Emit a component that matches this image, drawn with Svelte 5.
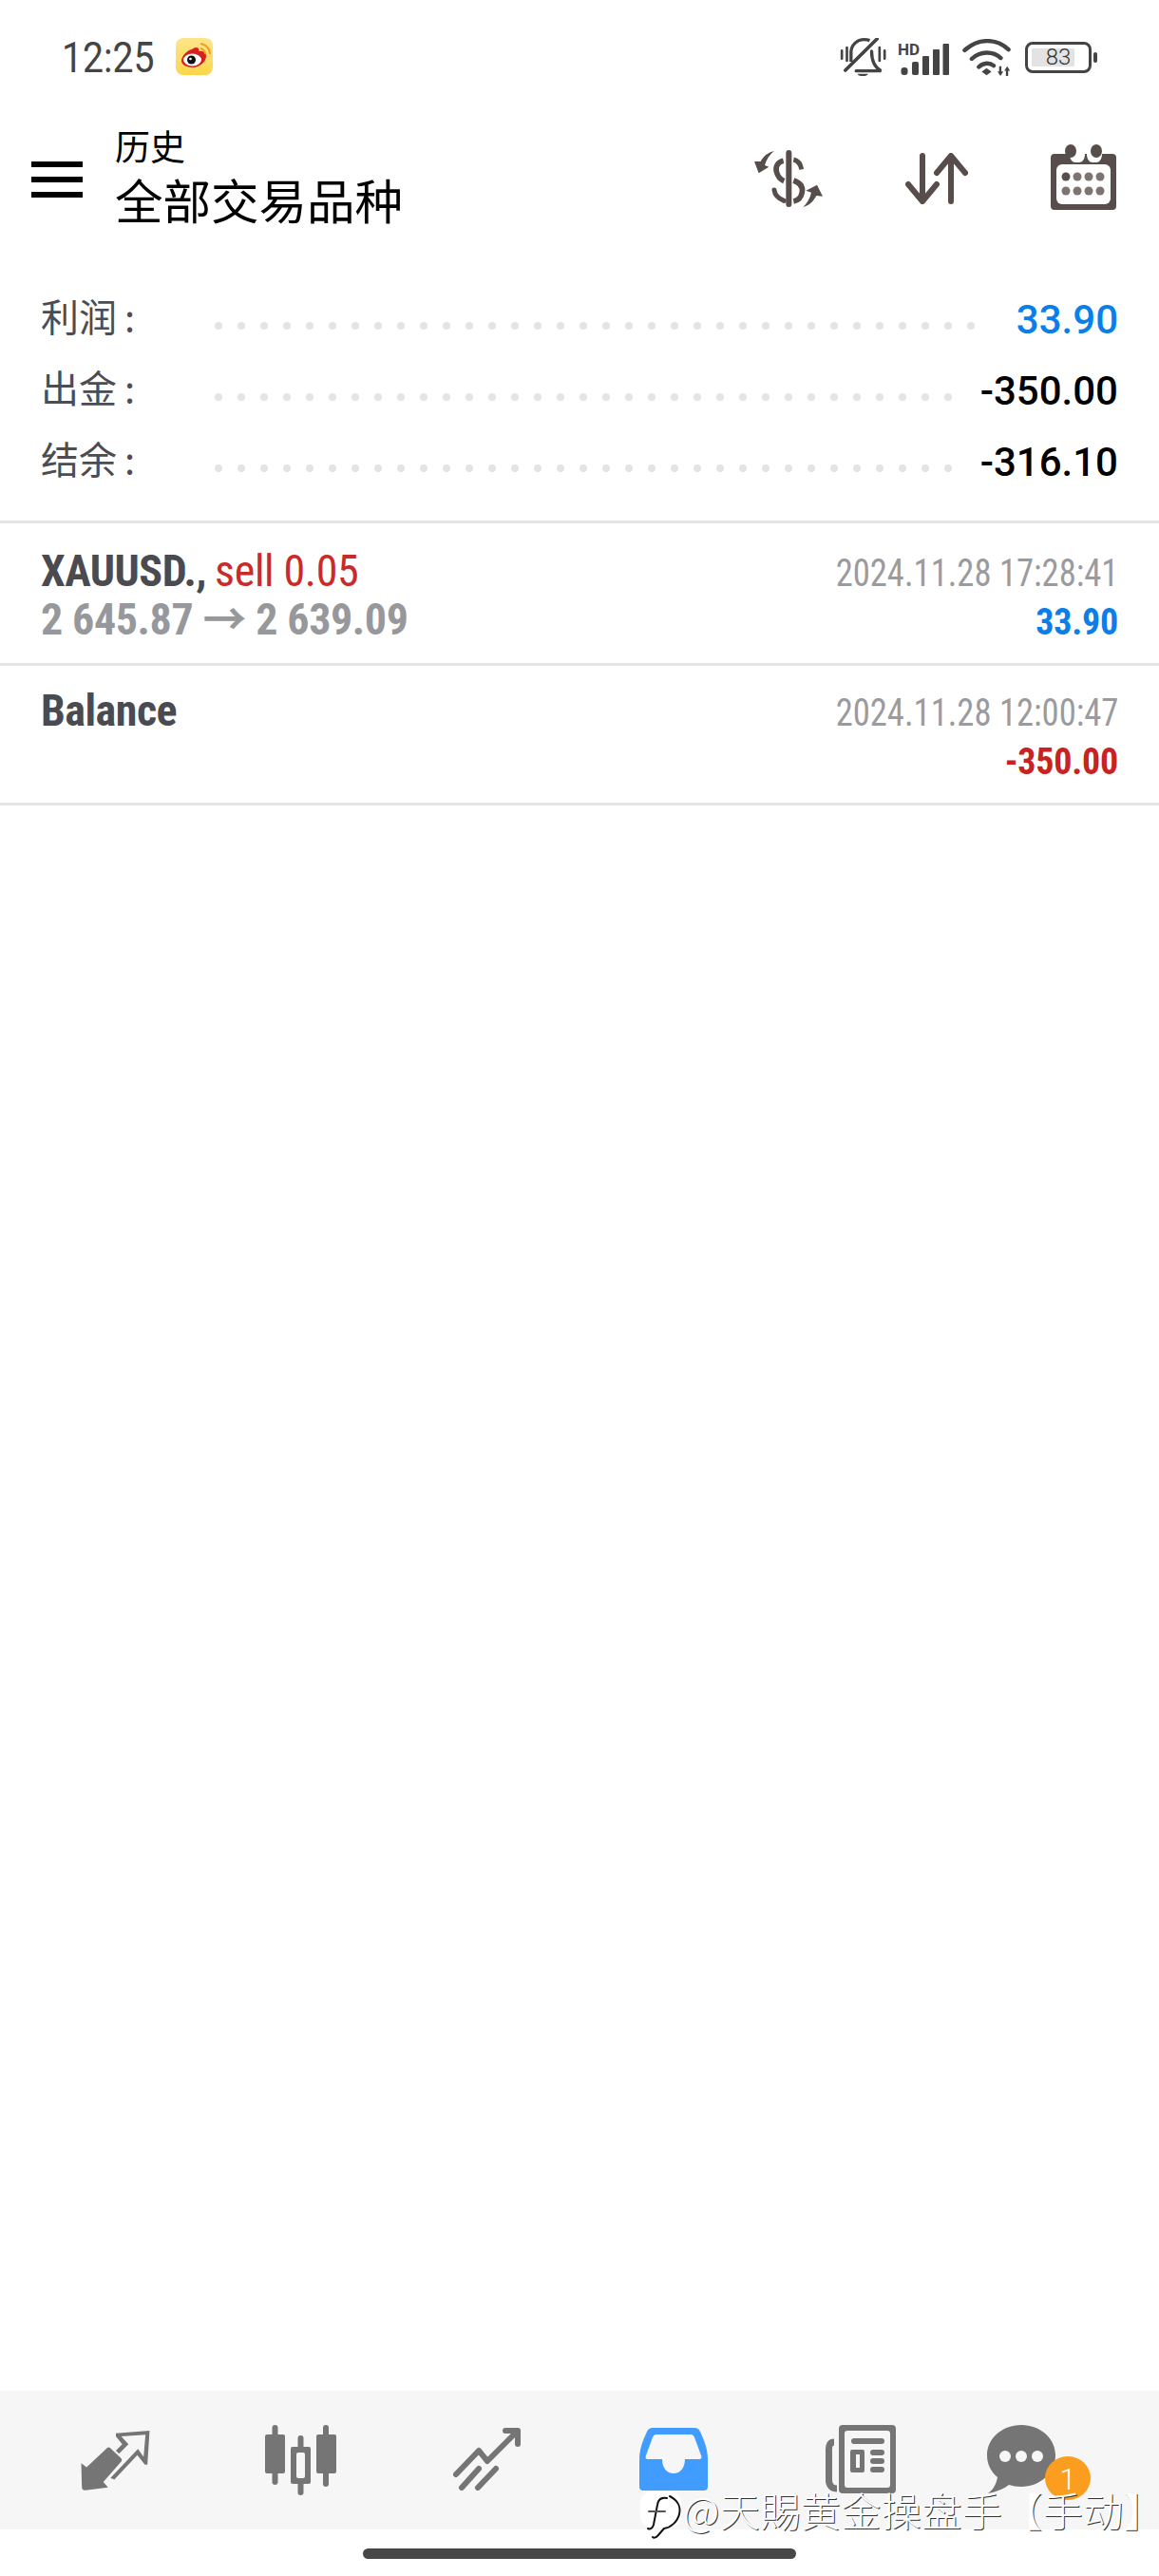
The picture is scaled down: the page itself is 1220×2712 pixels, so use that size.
<script>
  const rows = [
    { label: '利润', value: '33.90', cls: 'blue', dots: 34 },
    { label: '出金', value: '-350.00', cls: 'black', dots: 33 },
    { label: '结余', value: '-316.10', cls: 'black', dots: 33 }
  ];
</script>

<div class="page">
  <div class="status">
    <span class="time">12:25</span>
    <svg class="weibo" viewBox="0 0 39 39">
      <defs><linearGradient id="wb" x1="0" y1="0" x2="0" y2="1"><stop offset="0" stop-color="#fde58c"/><stop offset="1" stop-color="#fdd649"/></linearGradient></defs>
      <rect width="39" height="39" rx="8" fill="url(#wb)"/>
      <path d="M6 24c0-5 6-11 11-12 2-2 5-3 7-1 1 1 0 3 0 3 4-1 8 1 8 5 0 6-7 12-14 12-7 0-12-3-12-7z" fill="#d8201f"/>
      <ellipse cx="17.500" cy="23" rx="9.500" ry="6.500" fill="#fff"/>
      <circle cx="16.500" cy="23" r="4.500" fill="#111"/><circle cx="15.500" cy="22" r="1.300" fill="#fff"/>
      <path d="M26 11a6 6 0 0 1 5 6M26 6a11 11 0 0 1 10 11" fill="none" stroke="#eda11f" stroke-width="2"/>
    </svg>
    <div class="status-right">
      <svg class="bell" viewBox="45 30 142 120" fill="none" stroke="#444" stroke-width="10">
        <path d="M49 70v25M65 60v42M168 60v42M184 70v25" stroke-width="8" stroke-linecap="round"/>
        <path d="M78 105V75c0-22 18-40 42-40 6 0 12 1 17 3"/>
        <path d="M143 72c0 28 8 50 30 62H94" stroke-linecap="round"/>
        <path d="M60 132L160 33" stroke-width="11" stroke-linecap="round"/>
        <path d="M98 143h34c-4 10-30 10-34 0z" fill="#444" stroke="none"/>
      </svg>
      <svg class="signal" viewBox="0 0 54 34" fill="#444">
        <text x="0" y="13" class="hd">HD</text>
        <rect x="3.500" y="26" width="7" height="8" rx="3"/><rect x="15" y="20" width="7" height="14" rx="2"/><rect x="26" y="14" width="7" height="20" rx="1"/><rect x="37" y="7" width="7" height="27" rx="1"/><rect x="47.500" y="1" width="6.500" height="33" rx="1"/>
      </svg>
      <svg class="wifi" viewBox="430 35 150 115" fill="none" stroke="#444" stroke-width="13" stroke-linecap="round">
        <path d="M437 70C480 32 535 32 573 68M459 97C485 72 525 72 549 94M481 122C495 108 515 108 527 118"/>
        <path d="M505 126l15 11-15 11-15-11z" fill="#444" stroke="none"/>
        <path d="M544 120h7v16h6l-9 14-9-14h5zM565 150h7v-16h6l-9-14-9 14h5z" fill="#444" stroke="none"/>
      </svg>
      <div class="battery">
        <div class="batt-box"><span class="batt-fill"></span><span class="batt-num">83</span></div>
        <span class="batt-nub"></span>
      </div>
    </div>
  </div>

  <header class="top">
    <div class="burger"><i></i><i></i><i></i></div>
    <div class="titles">
      <div class="t1">历史</div>
      <div class="t2">全部交易品种</div>
    </div>
    <div class="actions">
      <svg class="a-dollar" viewBox="42 52 216 180" fill="#574d4a">
        <rect x="142" y="52" width="18" height="180" rx="9"/>
        <g fill="none" stroke="#574d4a">
          <path d="M134 86C116 90 108 104 112 120C116 136 124 145 136 150" stroke-width="17"/>
          <path d="M166 82C180 85 188 95 191 113" stroke-width="15"/>
          <path d="M166 148C186 155 196 168 193 185C190 203 178 212 166 214" stroke-width="17"/>
          <path d="M105 178C107 195 118 205 136 212" stroke-width="15" stroke-linecap="round"/>
        </g>
        <path d="M104 55C85 60 72 70 62 88L42 88L56 125L88 105L75 100C80 82 90 68 104 55Z"/>
        <path d="M196 232C215 227 228 215 238 196L258 198L240 162L205 180L222 186C218 205 208 220 196 232Z"/>
      </svg>
      <svg class="a-sort" viewBox="0 0 66 54" fill="none" stroke="#574d4a" stroke-width="6" stroke-linecap="round" stroke-linejoin="round">
        <path d="M18 3v48M3 33l15 18 15-18M48 51V3M33 21L48 3l15 18"/>
      </svg>
      <svg class="a-cal" viewBox="0 0 69 69">
        <path d="M4 10h16c0 6 3 9 6 9h4c3 0 6-3 6-9h2c0 6 3 9 6 9h4c3 0 6-3 6-9h11a4 4 0 0 1 4 4v51a4 4 0 0 1-4 4H4a4 4 0 0 1-4-4V14a4 4 0 0 1 4-4z" fill="#574d4a"/>
        <ellipse cx="21" cy="7" rx="6" ry="7" fill="#574d4a"/><ellipse cx="48" cy="7" rx="6" ry="7" fill="#574d4a"/>
        <rect x="6" y="21" width="57" height="42" rx="6" fill="#fff"/>
        {#each [16,28,40,52] as x, i}
          <ellipse cx={x} cy="34" rx="4.500" ry="4.500" fill={i === 0 ? '#574d4a' : '#7d7370'}/>
          <ellipse cx={x} cy="49" rx="4.500" ry="4.500" fill="#7d7370"/>
        {/each}
      </svg>
    </div>
  </header>

  <section class="summary">
    {#each rows as r}
      <div class="sum-row">
        <span class="label">{r.label}<b>:</b></span>
        <span class="dots">{#each Array(r.dots) as _}<i></i>{/each}</span>
        <span class="val {r.cls}">{r.value}</span>
      </div>
    {/each}
  </section>

  <section class="list">
    <div class="deal first">
      <div class="line">
        <span class="c sym">XAUUSD.,</span>
        <span class="c sell">sell 0.05</span>
        <span class="spacer"></span>
        <span class="c date">2024.11.28 17:28:41</span>
      </div>
      <div class="line">
        <span class="c price">2 645.87 → 2 639.09</span>
        <span class="spacer"></span>
        <span class="c pnl blue">33.90</span>
      </div>
    </div>
    <div class="deal second">
      <div class="line">
        <span class="c sym">Balance</span>
        <span class="spacer"></span>
        <span class="c date">2024.11.28 12:00:47</span>
      </div>
      <div class="line">
        <span class="spacer"></span>
        <span class="c pnl red lone">-350.00</span>
      </div>
    </div>
  </section>

  <div class="grow"></div>

  <nav class="bottom">
    <svg class="n n1" viewBox="45 42 217 190" fill="#757575">
      <path d="M45 145L62 158L127 97Q132 93 137 97L172 130Q176 135 172 140L115 205L130 222L58 231Q48 232 47 222Z"/>
      <path d="M155 50L262 42L255 150L247 150L223 120L150 197L138 192L225 100L243 125L249 55L172 60L195 85L165 115L155 105L175 85L155 60Z"/>
    </svg>
    <svg class="n n2" viewBox="0 0 75 74" fill="#757575">
      <rect x="0" y="10" width="21" height="41" rx="2"/><rect x="7.500" y="0" width="6" height="63" rx="3"/>
      <rect x="54" y="10" width="21" height="41" rx="2"/><rect x="61" y="0" width="6" height="65" rx="3"/>
      <rect x="34.500" y="11" width="6" height="63" rx="3"/>
      <rect x="27" y="23" width="21" height="39" rx="2"/><rect x="33" y="29" width="9" height="27" rx="2" fill="#f6f6f6"/>
    </svg>
    <svg class="n n3" viewBox="0 0 72 66" fill="none" stroke="#757575" stroke-width="6" stroke-linecap="round" stroke-linejoin="round">
      <path d="M3 49l24-25 9 11 32-32M55 3h13v14"/>
      <path d="M9 63l18-20M26 63l19-20"/>
    </svg>
    <svg class="n n4" viewBox="0 0 72 66">
      <path d="M14 0h44c3 0 5 2 6 4 5 11 8 19 8 30v28a4 4 0 0 1-4 4H4a4 4 0 0 1-4-4V34C0 23 3 15 8 4c1-2 3-4 6-4z" fill="#409cff"/>
      <path d="M18 7h36c2 0 3 1 4 3l7 19c1 3 0 4-2 4H48c0 9-5 15-12 15s-12-6-12-15H9c-2 0-3-1-2-4l7-19c1-2 2-3 4-3z" fill="#f6f6f6"/>
    </svg>
    <svg class="n n5" viewBox="0 0 74 72" fill="none">
      <rect x="14" y="0" width="60" height="72" rx="4" fill="#757575"/>
      <path d="M9 18C5 18 3.500 21 3.500 25V58C3.500 64 7 67 12 67" stroke="#757575" stroke-width="7"/>
      <rect x="20" y="6" width="48" height="60" rx="3" fill="#f6f6f6"/>
      <rect x="27" y="14" width="35" height="6" rx="3" fill="#757575"/>
      <rect x="26" y="26" width="15" height="24" rx="2" fill="#757575"/><rect x="32" y="31" width="4" height="14" fill="#f6f6f6"/>
      <rect x="47" y="26" width="15" height="6" rx="3" fill="#757575"/><rect x="47" y="35" width="15" height="6" rx="3" fill="#757575"/><rect x="47" y="44" width="15" height="6" rx="3" fill="#757575"/>
    </svg>
    <div class="chat">
      <svg viewBox="0 0 72 72">
        <path d="M36 0c20 0 36 14 36 32S56 65 36 65c-5 0-9-1-13-2-4 3-11 7-22 9 6-4 9-11 10-17C4 49 0 41 0 32 0 14 16 0 36 0z" fill="#757575"/>
        <circle cx="19" cy="33" r="6" fill="#f6f6f6"/><circle cx="36" cy="33" r="6" fill="#f6f6f6"/><circle cx="53" cy="33" r="6" fill="#f6f6f6"/>
      </svg>
      <span class="badge">1</span>
    </div>
  </nav>

  <div class="home"><span></span></div>

  <div class="watermark">
    <span class="wm-logo">
      <svg viewBox="0 0 43 48" fill="none" stroke="#111" stroke-width="2" stroke-linecap="round">
        <path d="M27 5C21 4 18 6 17 12L13 33C12 37 9 38 7 37"/>
        <path d="M8 19H25" stroke="#555"/>
        <path d="M30 3C38 7 42 14 40 22C38 30 31 36 24 37L17 45C15 47 13 47 12 46"/>
      </svg>
    </span>
    <span class="wm-text">@天賜黄金操盘手【手动<span class="halt">】</span></span>
  </div>
</div>

<style>
  :global(body) { margin: 0; background: #fff; }
  .page {
    position: relative;
    width: 1220px;
    height: 2712px;
    display: flex;
    flex-direction: column;
    background: #fff;
    overflow: hidden;
    font-family: Roboto, "Noto Sans CJK SC", sans-serif;
  }
  .status {
    height: 125px;
    flex: none;
    box-sizing: border-box;
    display: flex;
    align-items: flex-start;
    padding: 40px 65px 0 65px;
  }
  .time { font-size: 44px; line-height: 40px; margin-top: 1px; color: #444; width: 120px; font-family: Roboto, sans-serif; transform: scaleX(0.89); transform-origin: left center; }
  .weibo { width: 39px; height: 39px; }
  .status-right { margin-left: auto; display: flex; align-items: center; height: 40px; }
  .bell { width: 49px; height: 40px; }
  .signal { width: 54px; height: 34px; margin-left: 12px; margin-top: 3px; overflow: visible; }
  .hd { font: 700 17px Roboto, sans-serif; fill: #444; }
  .wifi { width: 51px; height: 39px; margin-left: 14px; }
  .battery { display: flex; align-items: center; margin-left: 15px; }
  .batt-box { position: relative; box-sizing: border-box; width: 70px; height: 33px; border: 3px solid #444; border-radius: 8px; }
  .batt-fill { position: absolute; left: 4px; top: 4px; bottom: 4px; width: 45px; background: #e3e3e3; border-radius: 1px; }
  .batt-num { position: absolute; inset: 0; text-align: center; font-size: 24px; font-weight: 300; line-height: 27px; color: #333; }
  .batt-nub { width: 4px; height: 11px; margin-left: 2px; background: #444; border-radius: 2px; }

  .top { height: 140px; flex: none; display: flex; align-items: flex-start; position: relative; }
  .burger { margin: 45px 0 0 33px; width: 54px; display: flex; flex-direction: column; gap: 10px; }
  .burger i { display: block; height: 6px; background: #000; }
  .titles { margin-left: 34px; color: #000; font-family: "Noto Sans CJK SC", sans-serif; }
  .t1 { font-size: 37px; line-height: 50px; margin-top: 3px; }
  .t2 { font-size: 50.5px; line-height: 62px; }
  .actions { margin-left: auto; position: relative; width: 426px; height: 100px; }
  .actions svg { position: absolute; }
  .a-dollar { left: 0; top: 33px; width: 72px; height: 60px; }
  .a-sort { left: 159px; top: 36px; width: 66px; height: 54px; }
  .a-cal { left: 312px; top: 27px; width: 69px; height: 69px; }

  .summary { flex: none; padding-top: 34px; height: 283px; box-sizing: border-box; }
  .sum-row { height: 75px; display: flex; align-items: center; padding: 0 43px; }
  .label { width: 183px; flex: none; margin-bottom: 8px; font-family: "Noto Sans CJK SC", sans-serif; font-size: 40px; line-height: 75px; color: #4c4d52; }
  .label b { font-weight: 400; margin-left: 8px; }
  .dots { display: flex; gap: 16px; margin-top: 13px; }
  .dots i { width: 8px; height: 8px; border-radius: 50%; background: #e4e4e4; }
  .val { margin-left: auto; font-size: 42px; font-weight: 500; line-height: 75px; }
  .blue { color: #0b7ee8; }
  .black { color: #000; }
  .red { color: #c92222; }

  .list { border-top: 3px solid #e4e4e4; flex: none; }
  .deal { box-sizing: border-box; border-bottom: 3px solid #e4e4e4; padding: 0 43px; }
  .first { height: 150px; padding-top: 25px; }
  .second { height: 147px; padding-top: 22px; }
  .line { display: flex; height: 51px; align-items: baseline; }
  .spacer { flex: 1; }
  .c { display: inline-block; white-space: nowrap; font-stretch: 75%; line-height: 50px; }
  .sym { font-size: 46px; font-weight: 700; color: #4a4b50; margin-right: 9px; letter-spacing: -0.5px; }
  .sell { font-size: 46px; color: #c92a2a; letter-spacing: -0.35px; }
  .price { font-size: 46px; font-weight: 700; color: #97989c; letter-spacing: -0.4px; }
  .date { font-size: 40px; color: #9a9b9e; transform: scaleX(0.915); transform-origin: right center; }
  .pnl { font-size: 38px; font-weight: 700; letter-spacing: -0.2px; }
  .lone { margin-top: 3px; }

  .grow { flex: 1; }

  .bottom { height: 146px; flex: none; background: #f6f6f6; position: relative; }
  .n { position: absolute; }
  .n1 { left: 85px; top: 42px; width: 73px; height: 63px; }
  .n2 { left: 279px; top: 36px; width: 75px; height: 74px; }
  .n3 { left: 477px; top: 39px; width: 72px; height: 66px; }
  .n4 { left: 673px; top: 39px; width: 72px; height: 66px; }
  .n5 { left: 869px; top: 36px; width: 74px; height: 72px; }
  .chat { position: absolute; left: 1039px; top: 36px; width: 72px; height: 72px; }
  .chat svg { width: 72px; height: 72px; display: block; }
  .badge { position: absolute; left: 61px; top: 33px; width: 48px; height: 46px; border-radius: 50%; background: #fb9e1f; color: #fff; text-align: center; font-size: 31px; font-weight: 300; line-height: 50px; }

  .home { height: 49px; flex: none; position: relative; }
  .home span { position: absolute; left: 382px; width: 456px; top: 20px; height: 11px; border-radius: 6px; background: #484848; }

  .watermark { position: absolute; left: 674px; top: 2619px; display: flex; align-items: center; height: 46px; }
  .wm-logo { width: 43px; height: 38px; border-radius: 12px; background: #fff; position: relative; }
  .wm-logo svg { position: absolute; left: 1px; top: 2px; width: 43px; height: 48px; overflow: visible; }
  .wm-text { margin-left: 2px; font-family: "Noto Sans CJK SC", sans-serif; font-size: 42px; font-weight: 300; color: #fff; line-height: 46px; text-shadow: 1px 1px 0 #333; white-space: nowrap; letter-spacing: 0.5px; }
  .halt { font-feature-settings: "halt"; }
</style>
